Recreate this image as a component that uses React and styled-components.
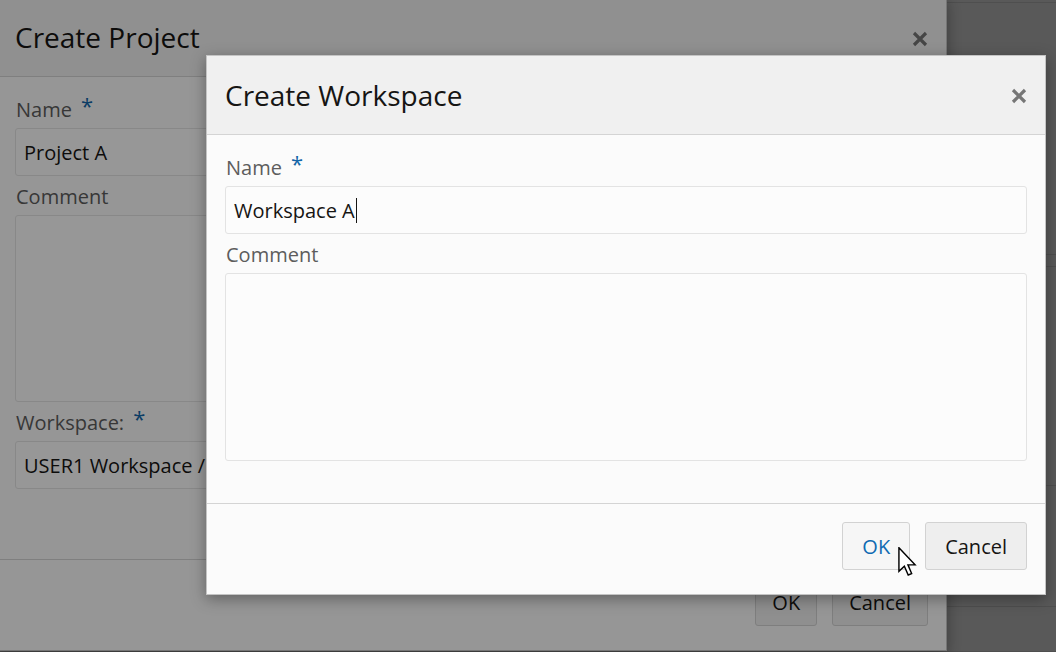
import React from "react";
import styled, { createGlobalStyle } from "styled-components";

const GlobalStyle = createGlobalStyle`
  html, body { margin: 0; padding: 0; width: 100%; height: 100%; overflow: hidden; }
  body { font-family: "Open Sans", "Noto Sans", "Liberation Sans", sans-serif; color: #161513; }
  * { box-sizing: border-box; }
`;

const Screen = styled.div`
  position: relative;
  width: 1056px;
  height: 652px;
  overflow: hidden;
  background: #f9f9f9;
`;

const BgPage = styled.div`
  display: flex;
  flex-direction: column;
  height: 100%;
`;

const BgRow = styled.div`
  height: ${(p) => p.$h}px;
  border-bottom: 1px solid #dcdcdc;
  flex: ${(p) => (p.$grow ? 1 : "none")};
`;

const Overlay = styled.div`
  position: absolute;
  inset: 0;
  background: rgba(0, 0, 0, 0.4);
`;

const Dialog = styled.div`
  position: absolute;
  left: ${(p) => p.$left}px;
  top: ${(p) => p.$top}px;
  width: ${(p) => p.$width}px;
  height: ${(p) => p.$height}px;
  display: flex;
  flex-direction: column;
  background: #fbfbfb;
  border: 1px solid #c4c4c4;
  box-shadow: 0 4px 14px rgba(0, 0, 0, 0.35);
`;

const Header = styled.div`
  height: 79px;
  flex: none;
  display: flex;
  align-items: center;
  justify-content: space-between;
  padding: 0 17px 0 18px;
  background: #f0f0f0;
  border-bottom: 1px solid #d4d4d4;
`;

const Title = styled.h1`
  margin: 0;
  font-size: 28px;
  font-weight: 400;
  color: #161513;
  letter-spacing: 0;
`;

const CloseBtn = styled.button`
  border: none;
  background: transparent;
  padding: 0;
  width: 18px;
  height: 18px;
  display: flex;
  align-items: center;
  justify-content: center;
  margin-top: ${(p) => p.$dy || 0}px;
  color: #767676;
`;

const Body = styled.div`
  flex: 1;
  padding: 19px 18px 0;
  display: flex;
  flex-direction: column;
`;

const Field = styled.div`
  display: flex;
  flex-direction: column;
  margin-bottom: 7px;
`;

const Label = styled.div`
  height: 28px;
  line-height: 28px;
  margin-bottom: 4px;
  padding-left: 1px;
  font-size: 20px;
  color: #5d5d5d;
  display: flex;
  align-items: center;
`;

const Star = styled.span`
  color: #1366a8;
  font-size: 22px;
  margin-left: 9px;
  position: relative;
  top: -5px;
`;

const TextBox = styled.div`
  height: ${(p) => p.$h || 48}px;
  border: 1px solid #e3e3e3;
  border-radius: 3px;
  background: #fcfcfc;
  padding: 0 8px;
  display: flex;
  align-items: center;
  font-size: 20px;
  color: #161513;
  white-space: nowrap;
  overflow: hidden;
`;

const Caret = styled.span`
  display: inline-block;
  width: 1px;
  height: 25px;
  background: #161513;
  margin-left: 1px;
`;

const Footer = styled.div`
  flex: none;
  border-top: 1px solid #d4d4d4;
  padding: 18px 18px 24px;
  display: flex;
  justify-content: flex-end;
  gap: 15px;
`;

const Button = styled.button`
  height: 48px;
  padding: 0 ${(p) => p.$pad || 19}px;
  font-family: inherit;
  font-size: 20px;
  border-radius: 3px;
  border: 1px solid #d2d2d2;
  background: ${(p) => (p.$hover ? "#f6f6f6" : "#eeeeee")};
  color: ${(p) => (p.$hover ? "#0f6bb3" : "#161513")};
  position: relative;
`;

const Pointer = styled.svg`
  position: absolute;
  left: 55px;
  top: 24px;
  pointer-events: none;
`;

const CloseIcon = () => (
  <svg width="16" height="16" viewBox="0 0 16 16">
    <path d="M2 2 L14 14 M14 2 L2 14" stroke="currentColor" strokeWidth="3.2" strokeLinecap="butt" />
  </svg>
);

export default function App() {
  return (
    <Screen>
      <GlobalStyle />
      <BgPage>
        <BgRow $h={3} />
        <BgRow $h={252} />
        <BgRow $h={12} />
        <BgRow $h={219} />
        <BgRow $h={121} />
        <BgRow $grow />
      </BgPage>
      <Overlay />

      <Dialog $left={-4} $top={-3} $width={951} $height={654}>
        <Header>
          <Title>Create Project</Title>
          <CloseBtn $dy={4}>
            <CloseIcon />
          </CloseBtn>
        </Header>
        <Body>
          <Field>
            <Label>
              Name<Star>*</Star>
            </Label>
            <TextBox>Project A</TextBox>
          </Field>
          <Field>
            <Label>Comment</Label>
            <TextBox $h={187} />
          </Field>
          <Field>
            <Label>
              Workspace:<Star>*</Star>
            </Label>
            <TextBox>USER1 Workspace / Default</TextBox>
          </Field>
        </Body>
        <Footer>
          <Button $pad={16}>OK</Button>
          <Button $pad={16}>Cancel</Button>
        </Footer>
      </Dialog>
      <Overlay />

      <Dialog $left={206} $top={55} $width={840} $height={540}>
        <Header>
          <Title>Create Workspace</Title>
          <CloseBtn $dy={2}>
            <CloseIcon />
          </CloseBtn>
        </Header>
        <Body>
          <Field>
            <Label>
              Name<Star>*</Star>
            </Label>
            <TextBox>
              Workspace A<Caret />
            </TextBox>
          </Field>
          <Field>
            <Label>Comment</Label>
            <TextBox $h={188} />
          </Field>
        </Body>
        <Footer>
          <Button $hover>
            OK
            <Pointer width="19" height="30" viewBox="0 0 13 21">
              <path
                d="M0.5 0.5 L0.5 17 L4.3 13.4 L7 19.6 L9.4 18.6 L6.8 12.5 L11.8 12.5 Z"
                fill="#fff"
                stroke="#000"
                strokeWidth="1"
                strokeLinejoin="miter"
              />
            </Pointer>
          </Button>
          <Button>Cancel</Button>
        </Footer>
      </Dialog>
    </Screen>
  );
}
